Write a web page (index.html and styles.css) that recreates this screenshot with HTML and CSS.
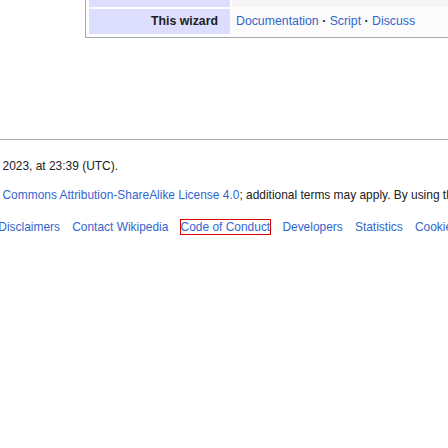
FILE: index.html
```html
<!DOCTYPE html>
<html lang="en">
<head>
<meta charset="utf-8">
<title>Footer</title>
<link rel="stylesheet" href="styles.css">
</head>
<body>
<div class="page">
  <table class="navbox">
    <tr class="nav-row">
      <th class="nav-group">&nbsp;</th>
      <td class="nav-list nav-even">&nbsp;</td>
    </tr>
    <tr class="nav-row">
      <th class="nav-group">This wizard</th>
      <td class="nav-list nav-odd"><a href="#">Documentation</a><b class="dot"> · </b><a href="#">Script</a><b class="dot"> · </b><a href="#">Discuss</a></td>
    </tr>
  </table>

  <hr class="rule">

  <footer class="footer">
    <ul class="footer-info">
      <li>2023, at 23:39 (UTC).</li>
      <li><a href="#">Commons Attribution-ShareAlike License 4.0</a>; additional terms may apply. By using this site, you agree to the Terms of Use and Privacy Policy.</li>
    </ul>
    <ul class="footer-places">
      <li><a href="#">Disclaimers</a></li>
      <li><a href="#">Contact Wikipedia</a></li>
      <li><a href="#" class="focused">Code of Conduct</a></li>
      <li><a href="#">Developers</a></li>
      <li><a href="#">Statistics</a></li>
      <li><a href="#">Cookie statement</a></li>
    </ul>
  </footer>
</div>
</body>
</html>
```
FILE: styles.css
```css
html, body {
  margin: 0;
  padding: 0;
  background: #ffffff;
  overflow: hidden;
}

body {
  font-family: "Liberation Sans", Arial, sans-serif;
  color: #202122;
  width: 448px;
  height: 448px;
}

.page {
  width: 448px;
}

a {
  color: #3366cc;
  text-decoration: none;
}

.navbox {
  margin-top: -22px;
  margin-left: 85px;
  width: 420px;
  border: 1px solid #a2a9b1;
  padding: 1px;
  border-spacing: 2px;
  font-size: 12.3px;
  line-height: 1.6;
  background: #fdfdfd;
}

.nav-row {
  height: 25px;
}

.nav-group {
  width: 117px;
  background: #ddddff;
  text-align: right;
  padding: 0 12px;
  font-weight: bold;
  white-space: nowrap;
  color: #202122;
}

.nav-list {
  text-align: left;
  padding: 0 4px;
  white-space: nowrap;
}

.nav-even {
  background: #f6f6f6;
}

.nav-odd {
  background: #fbfbfb;
}

.dot {
  font-weight: bold;
  color: #202122;
}

.rule {
  margin: 101px 0 0 0;
  border: 0;
  border-top: 1px solid #a2a9b1;
  height: 0;
}

.footer {
  font-size: 11.95px;
  line-height: 1.4;
  white-space: nowrap;
}

.footer-info {
  list-style: none;
  margin: 18px 0 0 0;
  padding: 0 0 0 2.5px;
  display: flex;
  flex-direction: column;
  gap: 12px;
}

.footer-places {
  list-style: none;
  margin: 16px 0 0 -1.7px;
  padding: 0;
  display: flex;
  gap: 12.2px;
}

.focused {
  outline: 1px solid #dd0000;
}
```
